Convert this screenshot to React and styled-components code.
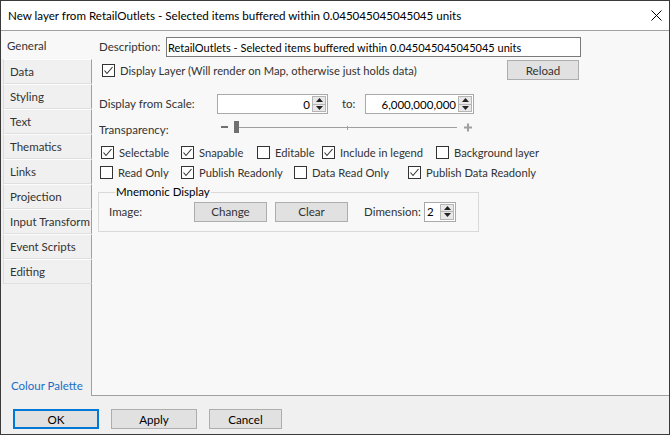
import React from "react";
import styled, { createGlobalStyle } from "styled-components";

const GlobalStyles = createGlobalStyle`
  * {
    margin: 0;
    padding: 0;
    box-sizing: border-box;
  }

  body {
    background-color: #ffffff;
    font-family: Lato, "Noto Sans", sans-serif;
  }
`;

const Window = styled.div`
  width: 670px;
  height: 435px;
  display: flex;
  flex-direction: column;
  border: 1px solid #3a3a3a;
  font-size: 11px;
  color: #333;
  background-color: #f0f0f0;
`;

const TitleBar = styled.div`
  height: 30px;
  display: flex;
  align-items: center;
  padding-left: 7px;
  background-color: #ffffff;
  border-bottom: 1px solid #a0a0a0;
  font-size: 11.6px;
  color: #000;
`;

const CloseButton = styled.div`
  margin-left: auto;
  width: 26px;
  height: 29px;
  display: flex;
  align-items: center;
  justify-content: center;
`;

const Body = styled.div`
  display: flex;
  height: 365px;
`;

const Sidebar = styled.div`
  width: 91px;
  display: flex;
  flex-direction: column;
  background-color: #f0f0f0;
`;

const Tab = styled.div`
  height: ${(p) => (p.$active ? "28px" : "25px")};
  display: flex;
  align-items: center;
  padding-left: 6px;
  margin-left: ${(p) => (p.$active ? "0" : "2px")};
  background-color: ${(p) => (p.$active ? "#f8f8f8" : "#f0f0f0")};
  border-top: ${(p) => (p.$active ? "none" : "1px solid #fcfcfc")};
  border-left: ${(p) => (p.$active ? "none" : "1px solid #dcdcdc")};
  border-right: ${(p) => (p.$active ? "none" : "1px solid #a0a0a0")};
  border-bottom: ${(p) => (p.$active ? "none" : "1px solid #e0e0e0")};
  white-space: nowrap;
  font-size: 11.5px;
  color: #333;
`;

const SidebarFill = styled.div`
  flex: 1;
  display: flex;
  align-items: flex-end;
  padding: 0 0 3px 10px;
  border-right: 1px solid #a0a0a0;
`;

const PaletteLink = styled.span`
  color: #1a6dc5;
  font-size: 11.5px;
  line-height: 14px;
`;

const Page = styled.div`
  flex: 1;
  display: flex;
  flex-direction: column;
  padding: 6px 0 0 7px;
  background-color: #f8f8f8;
  border-bottom: 1px solid #a0a0a0;
`;

const Row = styled.div`
  display: flex;
  align-items: ${(p) => (p.$top ? "flex-start" : "center")};
  height: ${(p) => p.$h || 20}px;
  margin-top: ${(p) => p.$mt || 0}px;
  padding-left: ${(p) => p.$pl || 0}px;
  width: ${(p) => (p.$w ? `${p.$w}px` : "auto")};
`;

const Label = styled.span`
  width: ${(p) => (p.$w ? `${p.$w}px` : "auto")};
  margin-left: ${(p) => p.$ml || 0}px;
  margin-top: ${(p) => p.$mt || 0}px;
  flex-shrink: 0;
  white-space: nowrap;
  line-height: 16px;
  font-size: 11.5px;
  color: #333;
`;

const TextInput = styled.div`
  width: ${(p) => p.$w}px;
  height: 20px;
  display: flex;
  align-items: center;
  padding-left: 1px;
  background-color: #fff;
  border: 1px solid #7a7a7a;
  color: #000;
  white-space: nowrap;
  overflow: hidden;
`;

const NumberBox = styled.div`
  width: ${(p) => p.$w}px;
  height: 20px;
  display: flex;
  align-items: center;
  background-color: #fff;
  border: 1px solid #a9a9a9;
  color: #000;
  font-size: 11.5px;
`;

const NumberValue = styled.span`
  flex: 1;
  text-align: ${(p) => (p.$left ? "left" : "right")};
  padding: 0 2px;
`;

const Spin = styled.div`
  width: 14px;
  height: 16px;
  margin-right: 1px;
  display: flex;
  flex-direction: column;
  border: 1px solid #b5b5b5;
  background-color: #e8e8e8;
`;

const SpinHalf = styled.div`
  flex: 1;
  display: flex;
  align-items: center;
  justify-content: center;
  border-top: ${(p) => (p.$down ? "1px solid #b5b5b5" : "none")};
`;

const Button = styled.div`
  width: ${(p) => p.$w}px;
  height: 20px;
  display: flex;
  align-items: center;
  justify-content: center;
  background-color: #e1e1e1;
  border: ${(p) => (p.$primary ? "2px solid #0078d7" : "1px solid #adadad")};
  color: ${(p) => (p.$dim ? "#333" : "#000")};
  margin-left: ${(p) => (p.$auto ? "auto" : `${p.$ml || 0}px`)};
  font-size: 11.6px;
`;

const CheckItem = styled.div`
  display: flex;
  align-items: center;
  gap: 5px;
  width: ${(p) => (p.$w ? `${p.$w}px` : "auto")};
  flex-shrink: 0;
  white-space: nowrap;
  font-size: 11.2px;
`;

const Box = styled.div`
  width: 13px;
  height: 13px;
  display: flex;
  align-items: center;
  justify-content: center;
  border: 1px solid #333;
  background-color: #fff;
`;

const Group = styled.fieldset`
  width: 381px;
  margin: 0 0 0 -1px;
  padding: 1px 0 9px 10px;
  border: 1px solid #d9d9d9;
  display: flex;
  align-items: center;
`;

const Legend = styled.legend`
  margin-left: 6px;
  padding: 0 1px;
  line-height: 16px;
  font-size: 11.5px;
  color: #000;
`;

const GroupRow = styled.div`
  display: flex;
  align-items: center;
  height: 21px;
`;

const Footer = styled.div`
  flex: 1;
  display: flex;
  align-items: flex-start;
  gap: 12px;
  padding: 13px 0 0 12px;
  background-color: #f0f0f0;
`;

const Check = ({ checked }) => (
  <Box>
    {checked && (
      <svg width="11" height="11" viewBox="0 0 11 11">
        <polyline points="1.5,5.5 4,8.5 9.5,2" fill="none" stroke="#333" strokeWidth="1.1" />
      </svg>
    )}
  </Box>
);

const CheckBox = ({ label, checked, w }) => (
  <CheckItem $w={w}>
    <Check checked={checked} />
    <span>{label}</span>
  </CheckItem>
);

const Arrow = ({ down }) => (
  <svg width="7" height="4" viewBox="0 0 7 4">
    <polygon points={down ? "0,0 7,0 3.5,4" : "0,4 7,4 3.5,0"} fill="#222" />
  </svg>
);

const NumberField = ({ w, value, left }) => (
  <NumberBox $w={w}>
    <NumberValue $left={left}>{value}</NumberValue>
    <Spin>
      <SpinHalf><Arrow /></SpinHalf>
      <SpinHalf $down><Arrow down /></SpinHalf>
    </Spin>
  </NumberBox>
);

const Slider = () => (
  <svg width="256" height="14" viewBox="0 0 256 14">
    <rect x="2" y="6" width="7" height="2" fill="#707070" />
    <line x1="19" y1="7.5" x2="238" y2="7.5" stroke="#a0a0a0" strokeWidth="1" />
    <line x1="128.5" y1="6" x2="128.5" y2="10" stroke="#a0a0a0" strokeWidth="1" />
    <rect x="15" y="1" width="5" height="12" fill="#707070" />
    <rect x="245" y="6.5" width="8" height="2" fill="#a0a0a0" />
    <rect x="248" y="3.5" width="2" height="8" fill="#a0a0a0" />
  </svg>
);

const tabs = [
  "Data",
  "Styling",
  "Text",
  "Thematics",
  "Links",
  "Projection",
  "Input Transform",
  "Event Scripts",
  "Editing",
];

const title =
  "New layer from RetailOutlets - Selected items buffered within 0.045045045045045 units";

export default function App() {
  return (
    <>
      <GlobalStyles />
      <Window>
        <TitleBar>
          <span>{title}</span>
          <CloseButton>
            <svg width="11" height="11" viewBox="0 0 11 11">
              <path d="M0.5 0.5 L10.5 10.5 M10.5 0.5 L0.5 10.5" stroke="#000" strokeWidth="1" />
            </svg>
          </CloseButton>
        </TitleBar>
        <Body>
          <Sidebar>
            <Tab $active>General</Tab>
            {tabs.map((t) => (
              <Tab key={t}>{t}</Tab>
            ))}
            <SidebarFill>
              <PaletteLink>Colour Palette</PaletteLink>
            </SidebarFill>
          </Sidebar>
          <Page>
            <Row>
              <Label $w={67}>Description:</Label>
              <TextInput $w={415}>
                RetailOutlets - Selected items buffered within 0.045045045045045 units
              </TextInput>
            </Row>
            <Row $mt={3} $pl={3} $w={480}>
              <CheckBox checked label="Display Layer (Will render on Map, otherwise just holds data)" />
              <Button $w={72} $auto $dim>Reload</Button>
            </Row>
            <Row $mt={14}>
              <Label $w={118}>Display from Scale:</Label>
              <NumberField w={111} value="0" />
              <Label $w={23} $ml={14}>to:</Label>
              <NumberField w={109} value="6,000,000,000" />
            </Row>
            <Row $mt={6} $h={22} $top>
              <Label $w={120} $mt={2}>Transparency:</Label>
              <Slider />
            </Row>
            <Row $pl={2}>
              <CheckBox checked w={80} label="Selectable" />
              <CheckBox checked w={76} label="Snapable" />
              <CheckBox w={65} label="Editable" />
              <CheckBox checked w={114} label="Include in legend" />
              <CheckBox label="Background layer" />
            </Row>
            <Row $pl={1}>
              <CheckBox w={81} label="Read Only" />
              <CheckBox checked w={113} label="Publish Readonly" />
              <CheckBox w={114} label="Data Read Only" />
              <CheckBox checked label="Publish Data Readonly" />
            </Row>
            <Row $mt={2} $h={50} $top>
              <Group>
                <Legend>Mnemonic Display</Legend>
                <GroupRow>
                  <Label $w={85}>Image:</Label>
                  <Button $w={73} $dim>Change</Button>
                  <Button $w={73} $ml={8} $dim>Clear</Button>
                  <Label $w={60} $ml={16}>Dimension:</Label>
                  <NumberField w={32} value="2" left />
                </GroupRow>
              </Group>
            </Row>
          </Page>
        </Body>
        <Footer>
          <Button $w={86} $primary>OK</Button>
          <Button $w={86}>Apply</Button>
          <Button $w={73}>Cancel</Button>
        </Footer>
      </Window>
    </>
  );
}
